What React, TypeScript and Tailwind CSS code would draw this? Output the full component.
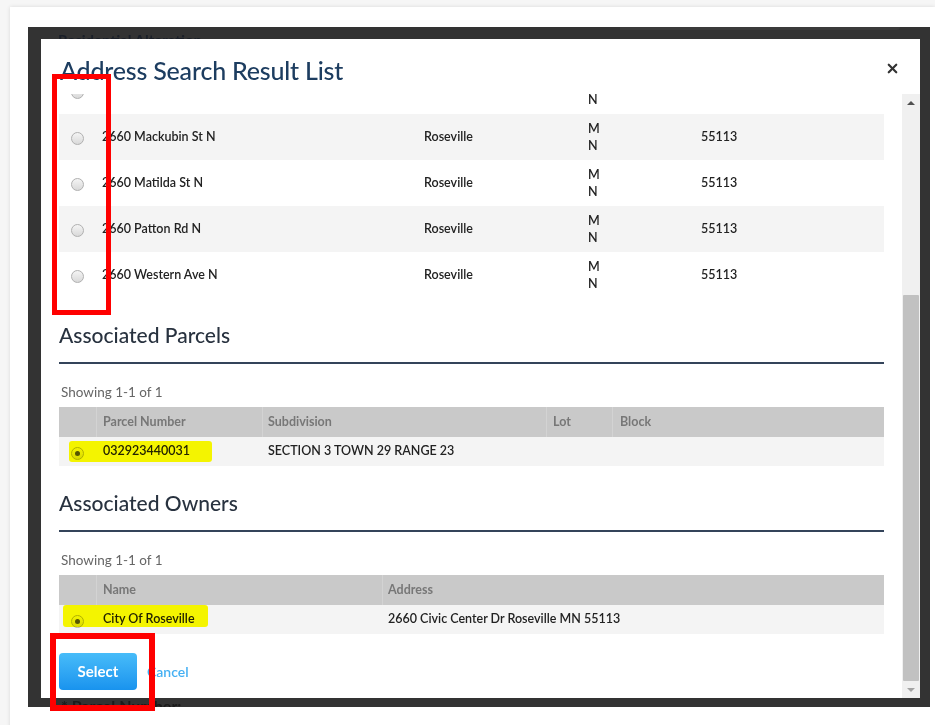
import React from 'react'
import { X } from 'lucide-react'

type AddressRow = { address: string; city: string; zip: string }

const addressRows: AddressRow[] = [
  { address: '', city: '', zip: '' },
  { address: '2660 Mackubin St N', city: 'Roseville', zip: '55113' },
  { address: '2660 Matilda St N', city: 'Roseville', zip: '55113' },
  { address: '2660 Patton Rd N', city: 'Roseville', zip: '55113' },
  { address: '2660 Western Ave N', city: 'Roseville', zip: '55113' },
]

function Radio({ checked }: { checked?: boolean }) {
  return (
    <span className="flex h-[13px] w-[13px] items-center justify-center rounded-full border border-[#b0b0b0] bg-linear-to-b from-[#f4f4f4] to-[#d9d9d9]">
      {checked && <span className="h-[5px] w-[5px] rounded-full bg-[#555]" />}
    </span>
  )
}

function SectionTitle({ title, className }: { title: string; className?: string }) {
  return (
    <div className={className}>
      <h3 className="text-[21px] font-medium leading-[24px] text-[#28323f]">{title}</h3>
      <div className="mt-[15px] h-[2px] bg-[#34445a]" />
    </div>
  )
}

function Scrollbar() {
  return (
    <div className="flex w-[18px] flex-col bg-[#f0f0f0]">
      <div className="flex h-[17px] items-center justify-center">
        <span className="h-0 w-0 border-x-[4px] border-b-[4px] border-x-transparent border-b-[#505050]" />
      </div>
      <div className="flex-1 px-[1px] pt-[184px]">
        <div className="h-full rounded-[1px] bg-[#c1c1c1]" />
      </div>
      <div className="flex h-[17px] items-center justify-center">
        <span className="h-0 w-0 border-x-[4px] border-t-[4px] border-x-transparent border-t-[#a3a3a3]" />
      </div>
    </div>
  )
}

export default function App() {
  return (
    <div className="relative h-[725px] w-[935px] overflow-hidden bg-[#f6f6f6] font-[Lato,'Noto_Sans',sans-serif]">
      <div className="ml-[10px] mt-[7px] h-[760px] bg-white pl-[18px] pt-[20px] shadow-[0_0_4px_rgba(0,0,0,0.12)]">
        {/* dimmed page behind the dialog */}
        <div className="relative h-[680px] w-[902px] overflow-hidden bg-[#333] pl-[13px] pt-[12px]">
          <div className="absolute left-[592px] top-0 h-[3px] w-[280px] rounded-br-[3px] bg-[#3b3b3b]" />
          <div className="absolute left-[30px] top-[2px] text-[15px] font-bold text-[#1b2029]">Residential Alteration</div>
          <div className="absolute left-[33px] top-[667px] text-[16px] font-bold text-[#1b1b1b]">* Parcel Number:</div>

          <div className="relative flex h-[659px] w-[879px] flex-col bg-white">
            <div className="flex h-[55px] items-start justify-between pl-[19px] pr-[20px] pt-[16px]">
              <h2 className="text-[25px] font-medium leading-[30px] tracking-[-0.2px] text-[#1d3d60]">Address Search Result List</h2>
              <X size={15} strokeWidth={3.5} className="mt-[6px] text-[#333]" />
            </div>

            <div className="flex min-h-0 flex-1">
              <div className="min-w-0 flex-1 overflow-hidden px-[18px]">
                <div className="-mt-[26px] text-[12.5px] font-semibold text-[#222]">
                  {addressRows.map((row, i) => (
                    <div
                      key={i}
                      className={`grid h-[46px] grid-cols-[43px_322px_164px_113px_1fr] items-center ${i % 2 === 1 ? 'bg-[#f4f4f4]' : 'bg-white'}`}
                    >
                      <div className="pl-[12px] pt-[3px]">
                        <Radio />
                      </div>
                      <div>{row.address}</div>
                      <div>{row.city}</div>
                      <div className="flex flex-col leading-[17px]">
                        <span>M</span>
                        <span>N</span>
                      </div>
                      <div>{row.zip}</div>
                    </div>
                  ))}

                  <SectionTitle title="Associated Parcels" className="mt-[25px]" />
                  <div className="mt-[19px] pl-[2px] text-[13.5px] font-normal leading-[18px] text-[#666]">Showing 1-1 of 1</div>
                  <div className="mt-[6px]">
                    <div className="grid h-[30px] grid-cols-[37px_166px_284px_66px_1fr] items-center bg-[#c9c9c9] font-bold text-[#777]">
                      <div className="h-full" />
                      <div className="flex h-full items-center border-l border-[#d3d3d3] pl-[6px]">Parcel Number</div>
                      <div className="flex h-full items-center border-l border-[#d3d3d3] pl-[5px]">Subdivision</div>
                      <div className="flex h-full items-center border-l border-[#d3d3d3] pl-[6px]">Lot</div>
                      <div className="flex h-full items-center border-l border-[#d3d3d3] pl-[7px]">Block</div>
                    </div>
                    <div className="grid h-[29px] grid-cols-[37px_166px_284px_66px_1fr] items-center bg-[#f4f4f4]">
                      <div className="pl-[12px] pt-[3px]">
                        <Radio checked />
                      </div>
                      <div className="pl-[7px]">032923440031</div>
                      <div className="pl-[6px]">SECTION 3 TOWN 29 RANGE 23</div>
                      <div />
                      <div />
                    </div>
                  </div>

                  <SectionTitle title="Associated Owners" className="mt-[25px]" />
                  <div className="mt-[19px] pl-[2px] text-[13.5px] font-normal leading-[18px] text-[#666]">Showing 1-1 of 1</div>
                  <div className="mt-[6px]">
                    <div className="grid h-[30px] grid-cols-[37px_286px_1fr] items-center bg-[#c9c9c9] font-bold text-[#777]">
                      <div className="h-full" />
                      <div className="flex h-full items-center border-l border-[#d3d3d3] pl-[6px]">Name</div>
                      <div className="flex h-full items-center border-l border-[#d3d3d3] pl-[5px]">Address</div>
                    </div>
                    <div className="grid h-[29px] grid-cols-[37px_286px_1fr] items-center bg-[#f4f4f4]">
                      <div className="pl-[12px] pt-[3px]">
                        <Radio checked />
                      </div>
                      <div className="pl-[7px]">City Of Roseville</div>
                      <div className="pl-[6px]">2660 Civic Center Dr Roseville MN 55113</div>
                    </div>
                  </div>

                  <div className="mt-[19px] flex items-center gap-[10px]">
                    <button className="h-[37px] w-[78px] rounded-[4px] bg-linear-to-b from-[#47bcf9] to-[#1893ee] text-[15px] font-bold text-white">
                      Select
                    </button>
                    <button className="text-[14px] font-semibold text-[#45b0f3]">Cancel</button>
                  </div>
                </div>
              </div>
              <Scrollbar />
            </div>
          </div>
        </div>
      </div>

      {/* review markup drawn over the screen */}
      <div className="pointer-events-none absolute left-[69px] top-[441px] h-[21px] w-[143px] rounded-[3px] bg-[#ffff00] mix-blend-multiply" />
      <div className="pointer-events-none absolute left-[63px] top-[605px] h-[22px] w-[145px] rounded-[3px] bg-[#ffff00] mix-blend-multiply" />
      <div className="pointer-events-none absolute left-[52px] top-[74px] h-[241px] w-[59px] border-[5px] border-[#ff0000]" />
      <div className="pointer-events-none absolute left-[50px] top-[633px] h-[78px] w-[105px] border-[6px] border-[#ff0000]" />
    </div>
  )
}
